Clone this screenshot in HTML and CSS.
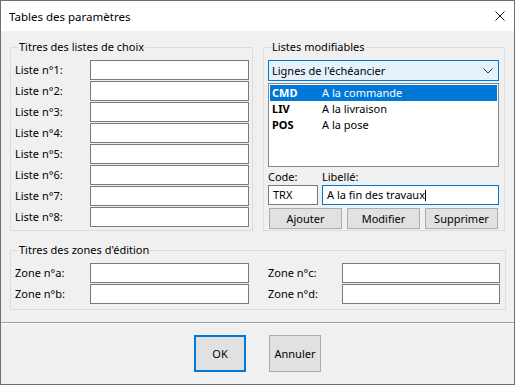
FILE: index.html
```html
<!DOCTYPE html>
<html lang="fr">
<head>
    <meta charset="UTF-8">
    <meta name="viewport" content="width=device-width, initial-scale=1.0">
    <title>Tables des paramètres</title>
    <link rel="stylesheet" href="styles.css">
</head>
<body>
    <div class="window">
        <div class="titlebar">
            <span class="title">Tables des paramètres</span>
            <svg class="close" width="10" height="10" viewBox="0 0 10 10">
                <path d="M0.5 0.5 L9.5 9.5 M9.5 0.5 L0.5 9.5" stroke="#111" stroke-width="1" fill="none"/>
            </svg>
        </div>

        <div class="content">
            <fieldset class="group group-lists">
                <legend>Titres des listes de choix</legend>
                <div class="form-grid">
                    <label>Liste n°1:</label><div class="field"></div>
                    <label>Liste n°2:</label><div class="field"></div>
                    <label>Liste n°3:</label><div class="field"></div>
                    <label>Liste n°4:</label><div class="field"></div>
                    <label>Liste n°5:</label><div class="field"></div>
                    <label>Liste n°6:</label><div class="field"></div>
                    <label>Liste n°7:</label><div class="field"></div>
                    <label>Liste n°8:</label><div class="field"></div>
                </div>
            </fieldset>

            <fieldset class="group group-edit">
                <legend>Listes modifiables</legend>
                <div class="edit-body">
                    <div class="combo">
                        <span>Lignes de l'échéancier</span>
                        <svg width="10" height="6" viewBox="0 0 10 6">
                            <path d="M0.5 0.5 L5 5 L9.5 0.5" stroke="#333" stroke-width="1" fill="none"/>
                        </svg>
                    </div>
                    <div class="listbox">
                        <div class="item selected"><span class="code">CMD</span><span>A la commande</span></div>
                        <div class="item"><span class="code">LIV</span><span>A la livraison</span></div>
                        <div class="item"><span class="code">POS</span><span>A la pose</span></div>
                    </div>
                    <div class="edit-row">
                        <label>Code:</label>
                        <label>Libellé:</label>
                        <div class="field">TRX</div>
                        <div class="field focused">A la fin des travaux<span class="caret"></span></div>
                    </div>
                    <div class="actions">
                        <button class="btn">Ajouter</button>
                        <button class="btn">Modifier</button>
                        <button class="btn">Supprimer</button>
                    </div>
                </div>
            </fieldset>

            <fieldset class="group group-zones">
                <legend>Titres des zones d'édition</legend>
                <div class="zone-grid">
                    <label>Zone n°a:</label><div class="field"></div>
                    <span></span>
                    <label>Zone n°c:</label><div class="field"></div>
                    <label>Zone n°b:</label><div class="field"></div>
                    <span></span>
                    <label>Zone n°d:</label><div class="field"></div>
                </div>
            </fieldset>
        </div>

        <div class="footer">
            <button class="btn big default">OK</button>
            <button class="btn big">Annuler</button>
        </div>
    </div>
</body>
</html>
```

FILE: styles.css
```css
* {
    box-sizing: border-box;
}

body {
    margin: 0;
    font-family: "Noto Sans", "Liberation Sans", sans-serif;
    font-size: 11px;
    color: #000;
}

.window {
    width: 515px;
    height: 385px;
    border: 1px solid #6f6f6f;
    background-color: #f0f0f0;
    display: flex;
    flex-direction: column;
}

.titlebar {
    height: 30px;
    background-color: #fff;
    display: flex;
    align-items: center;
    justify-content: space-between;
    padding: 0 9px 0 8px;
}

.title {
    font-size: 11.5px;
}

.content {
    height: 291px;
    padding: 8px 9px 0 9px;
    display: grid;
    grid-template-columns: 243px 242px;
    grid-template-rows: 192px 68px;
    column-gap: 10px;
    row-gap: 11px;
    align-items: start;
}

.group {
    margin: 0;
    padding: 0;
    min-width: 0;
    border: 1px solid #dcdcdc;
    height: 100%;
}

.group legend {
    margin-left: 7px;
    padding: 0 1px;
    line-height: 16px;
}

.group-zones {
    grid-column: 1 / -1;
    width: 496px;
}

label {
    line-height: 16px;
}

.field {
    height: 20px;
    background-color: #fff;
    border: 1px solid #7a7a7a;
    line-height: 18px;
    padding: 0 4px;
    white-space: nowrap;
}

.form-grid {
    display: grid;
    grid-template-columns: 75px 159px;
    grid-auto-rows: 20px;
    row-gap: 1px;
    align-items: center;
    padding: 5px 3px 0 4px;
}

.edit-body {
    padding: 5px 5px 0 4px;
}

.combo {
    height: 21px;
    border: 1px solid #0078d7;
    background-color: #e5f1fb;
    display: flex;
    align-items: center;
    justify-content: space-between;
    padding: 0 5px 0 3px;
}

.listbox {
    margin-top: 2px;
    height: 84px;
    border: 1px solid #828790;
    background-color: #fff;
    padding: 1px;
}

.item {
    height: 16px;
    line-height: 16px;
    padding-left: 2px;
    display: flex;
}

.item .code {
    width: 50px;
    font-weight: bold;
}

.item.selected {
    background-color: #0078d7;
    color: #fff;
}

.edit-row {
    display: grid;
    grid-template-columns: 50px 177px;
    column-gap: 4px;
    grid-template-rows: 18px 20px;
    align-items: end;
}

.field.focused {
    border-color: #0078d7;
}

.caret {
    display: inline-block;
    width: 1px;
    height: 11px;
    background-color: #000;
    vertical-align: -2px;
}

.actions {
    margin-top: 3px;
    padding: 0 1px;
    display: grid;
    grid-template-columns: repeat(3, 1fr);
    column-gap: 5px;
}

.btn {
    font-family: inherit;
    font-size: 11px;
    color: #000;
    height: 21px;
    padding: 0;
    background-color: #e1e1e1;
    border: 1px solid #adadad;
}

.zone-grid {
    display: grid;
    grid-template-columns: 75px 159px 19px 74px 158px;
    grid-auto-rows: 20px;
    row-gap: 1px;
    align-items: center;
    padding: 5px 5px 0 4px;
}

.footer {
    flex: 1;
    border-top: 1px solid #a0a0a0;
    box-shadow: inset 0 1px 0 #fff;
    display: flex;
    align-items: center;
    justify-content: center;
    gap: 23px;
}

.btn.big {
    width: 52px;
    height: 37px;
}

.btn.default {
    border: 2px solid #0078d7;
}
```
